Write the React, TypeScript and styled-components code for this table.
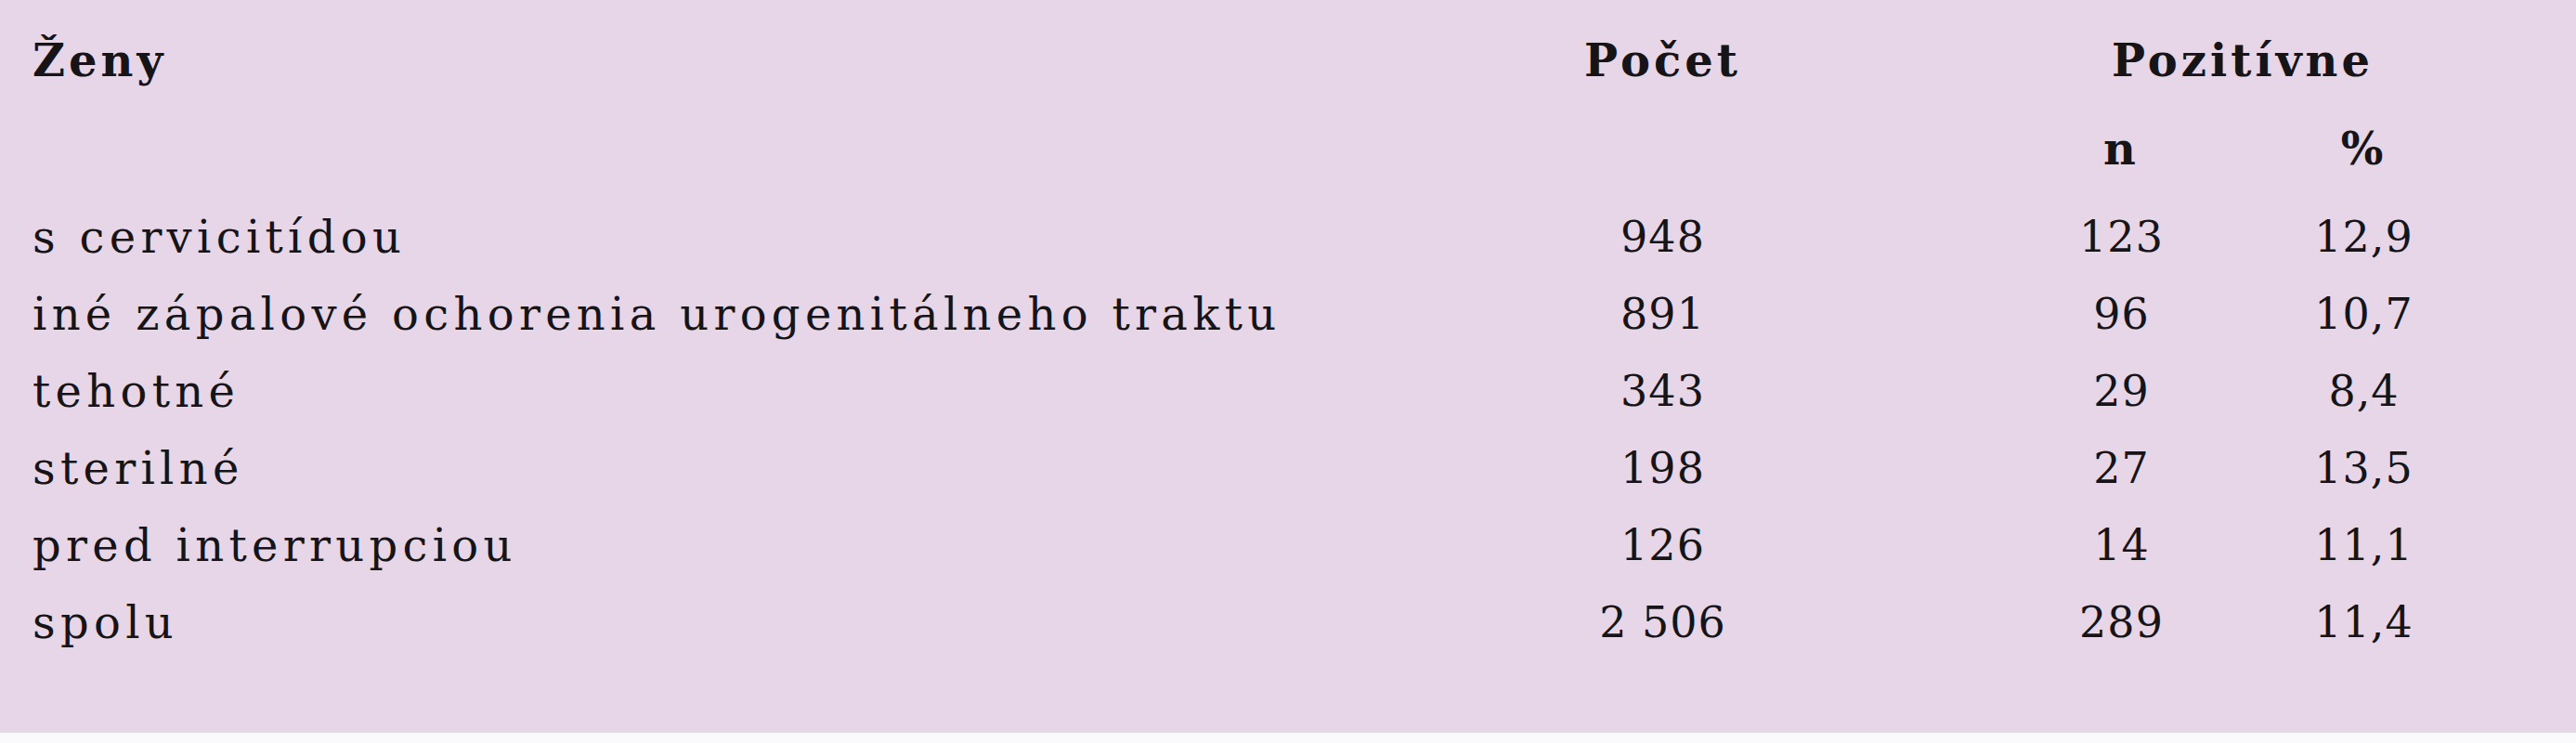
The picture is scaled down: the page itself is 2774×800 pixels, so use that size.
import { Fragment } from "react";
import styled, { createGlobalStyle } from "styled-components";

const GlobalStyle = createGlobalStyle`
  html, body {
    margin: 0;
    padding: 0;
    background: #fafafc;
  }
`;

const Panel = styled.div`
  width: 2774px;
  height: 789px;
  background: #e6d6e8;
  border-bottom: 2px solid #dedbe0;
  box-sizing: border-box;
  padding: 24px 0 0 35px;
`;

const Grid = styled.div`
  display: grid;
  grid-template-columns: 1392px 727px 261px 261px;
  grid-template-rows: 82px 107px repeat(6, 83px);
  color: #161416;
  font-family: "DejaVu Serif", "Liberation Serif", serif;
`;

interface CellProps {
  $center?: boolean;
  $span?: number;
}

const Cell = styled.div<CellProps>`
  display: flex;
  align-items: center;
  justify-content: ${({ $center }) => ($center ? "center" : "flex-start")};
  grid-column: ${({ $span }) => ($span ? `span ${$span}` : "auto")};
  white-space: nowrap;
`;

const HeadCell = styled(Cell)`
  font-size: 48px;
  font-weight: 700;
  letter-spacing: 4px;
`;

const LabelCell = styled(Cell)`
  font-size: 48px;
  letter-spacing: 5.3px;
`;

const NumCell = styled(Cell)`
  font-size: 46px;
  letter-spacing: 1px;
  justify-content: center;
`;

const rows = [
  ["s cervicitídou", "948", "123", "12,9"],
  ["iné zápalové ochorenia urogenitálneho traktu", "891", "96", "10,7"],
  ["tehotné", "343", "29", "8,4"],
  ["sterilné", "198", "27", "13,5"],
  ["pred interrupciou", "126", "14", "11,1"],
  ["spolu", "2 506", "289", "11,4"],
];

const App = () => {
  return (
    <>
      <GlobalStyle />
      <Panel>
        <Grid>
          <HeadCell>Ženy</HeadCell>
          <HeadCell $center>Počet</HeadCell>
          <HeadCell $center $span={2}>
            Pozitívne
          </HeadCell>

          <Cell />
          <Cell />
          <HeadCell $center>n</HeadCell>
          <HeadCell $center>%</HeadCell>

          {rows.map(([label, count, n, pct]) => (
            <Fragment key={label}>
              <LabelCell>{label}</LabelCell>
              <NumCell>{count}</NumCell>
              <NumCell>{n}</NumCell>
              <NumCell>{pct}</NumCell>
            </Fragment>
          ))}
        </Grid>
      </Panel>
    </>
  );
};

export default App;
